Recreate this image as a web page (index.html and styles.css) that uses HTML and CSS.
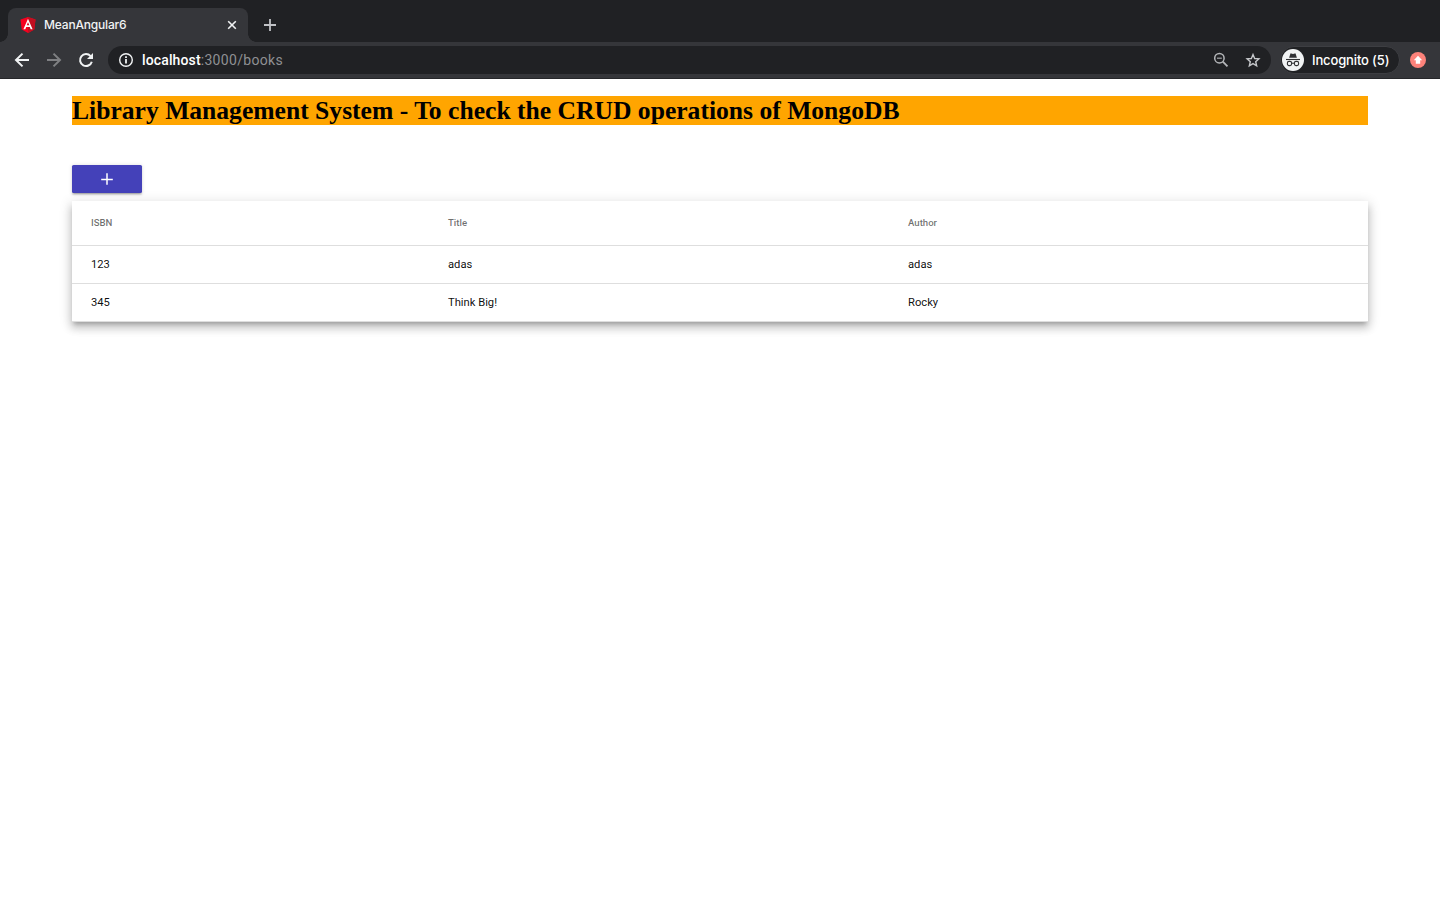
FILE: index.html
```html
<!DOCTYPE html>
<html lang="en">
<head>
<meta charset="utf-8">
<title>MeanAngular6</title>
<link rel="stylesheet" href="styles.css">
</head>
<body>
<div class="tabstrip">
  <div class="tab">
    <svg class="favicon" width="16" height="16" viewBox="0 0 16 16"><path fill="#f5001f" d="M8 0 15.5 2.6 14.3 12.4 8 16 1.7 12.4.5 2.6z"/><path fill="#c20f20" d="M8 0 15.5 2.6 14.3 12.4 8 16z"/><path fill="#fff" fill-rule="evenodd" d="M8 1.8 3.4 12.2h1.9l.9-2.3h3.6l.9 2.3h1.9zM8 5.2l1.3 3.1H6.7z"/></svg>
    <span class="tab-title">MeanAngular6</span>
    <svg class="close" width="10" height="10" viewBox="0 0 10 10"><path d="M1.2 1.2l7.6 7.6M8.8 1.2L1.2 8.8" stroke="#f1f3f4" stroke-width="1.6"/></svg>
  </div>
  <svg class="new-tab" width="12" height="12" viewBox="0 0 12 12"><path d="M6 0v12M0 6h12" stroke="#c0c2c6" stroke-width="1.8"/></svg>
</div>
<div class="toolbar">
  <svg class="nav" width="16" height="16" viewBox="0 0 16 16"><path d="M15 8H2.4M8.5 1.6 2 8l6.5 6.4" fill="none" stroke="#f1f3f4" stroke-width="2"/></svg>
  <svg class="nav" width="16" height="16" viewBox="0 0 16 16"><path d="M1 8h12.6M7.5 1.6 14 8l-6.5 6.4" fill="none" stroke="#7f8083" stroke-width="2"/></svg>
  <svg class="nav" width="16" height="16" viewBox="0 0 16 16"><path d="M12.6 4.1A6 6 0 1 0 13.8 9.7" fill="none" stroke="#f1f3f4" stroke-width="2"/><path d="M15 1V7H9z" fill="#f1f3f4"/></svg>
  <div class="omnibox">
    <svg width="16" height="16" viewBox="0 0 16 16"><circle cx="8" cy="8" r="6.3" fill="none" stroke="#f1f3f4" stroke-width="1.4"/><path d="M8 7v4.6M8 4.3V6" stroke="#f1f3f4" stroke-width="1.8"/></svg>
    <span class="url"><span class="host">localhost</span>:3000/books</span>
    <svg class="lens" width="16" height="16" viewBox="0 0 16 16"><circle cx="6.4" cy="6.2" r="4.7" fill="none" stroke="#b4b6b9" stroke-width="1.5"/><path d="M9.8 9.6l4.7 4.8" stroke="#b4b6b9" stroke-width="1.8"/><path d="M4 6.2h4.8" stroke="#a4a6a9" stroke-width="1.2"/></svg>
    <svg width="16" height="16" viewBox="0 0 16 16"><path d="M8 2.6l1.65 3.9 4.25.35-3.2 2.8.95 4.15L8 11.6l-3.65 2.2.95-4.15-3.2-2.8 4.25-.35z" fill="none" stroke="#c4c6c9" stroke-width="1.4"/></svg>
  </div>
  <div class="incognito">
    <svg width="22" height="22" viewBox="0 0 22 22"><circle cx="11" cy="11" r="11" fill="#f1f3f4"/><path d="M7.1 8.8 8.3 4.9q.2-.7.9-.5l1.8.5 1.8-.5q.7-.2.9.5l1.2 3.9z" fill="#303134"/><path d="M4 10.5h14" stroke="#303134" stroke-width="1.1"/><g fill="none" stroke="#303134" stroke-width="1.1"><rect x="5.4" y="12.4" width="4.2" height="4.2" rx="1.6"/><rect x="12.4" y="12.4" width="4.2" height="4.2" rx="1.6"/><path d="M9.6 14.2h2.8"/></g></svg>
    <span class="incognito-label">Incognito (5)</span>
  </div>
  <svg class="update" width="16" height="16" viewBox="0 0 16 16"><circle cx="8" cy="8" r="8" fill="#fc827a"/><path d="M8 3.8 12.2 8.3H10.2v3.5H5.8V8.3H3.8z" fill="#fff"/></svg>
</div>
<main class="page">
  <h1 class="heading"><span class="heading-text">Library Management System - To check the CRUD operations of MongoDB</span></h1>
  <button class="add" aria-label="Add"><svg width="12" height="12" viewBox="0 0 12 12"><path d="M6 .2v11.6M.2 6.4h11.6" stroke="#fff" stroke-width="1.5"/></svg></button>
  <div class="table">
    <div class="row head"><span>ISBN</span><span>Title</span><span>Author</span></div>
    <div class="row"><span>123</span><span>adas</span><span>adas</span></div>
    <div class="row"><span>345</span><span>Think Big!</span><span>Rocky</span></div>
  </div>
</main>
</body>
</html>
```
FILE: styles.css
```css
* { box-sizing: border-box; }
body { margin: 0; height: 900px; overflow: hidden; background: #fff; font-family: Roboto, "Liberation Sans", sans-serif; }
svg { display: block; flex: none; }

.tabstrip { display: flex; align-items: flex-start; height: 42px; padding: 8px 0 0 8px; background: #202124; }
.tab { position: relative; display: flex; align-items: center; width: 240px; height: 34px; padding: 0 11px 0 12px; background: #35363a; border-radius: 8px 8px 0 0; }
.tab::before, .tab::after { content: ""; position: absolute; bottom: 0; width: 8px; height: 8px; }
.tab::before { left: -8px; background: radial-gradient(circle at 0 0, transparent 7.5px, #35363a 8px); }
.tab::after { right: -8px; background: radial-gradient(circle at 100% 0, transparent 7.5px, #35363a 8px); }
.tab-title { flex: 1; margin-left: 8px; color: #f1f3f4; font: 500 12px/16px Inter, sans-serif; letter-spacing: -0.18px; }
.new-tab { margin: 11px 0 0 16px; }

.toolbar { display: flex; align-items: center; height: 37px; padding: 0 14px; background: #35363a; border-bottom: 1px solid #26272a; }
.nav { margin-right: 16px; }
.omnibox { display: flex; align-items: center; width: 1163px; height: 28px; margin-left: -2px; padding: 0 10px; background: #202124; border-radius: 14px; }
.url { flex: 1; margin-left: 8px; color: #8f9093; font: 14px/18px Roboto, sans-serif; letter-spacing: 0.32px; }
.host { color: #fff; font-weight: 500; letter-spacing: 0.13px; }
.lens { margin-right: 16px; }
.incognito { display: flex; align-items: center; width: 120px; height: 28px; margin-left: 9px; padding-left: 1px; background: #202124; border: 1px solid #3d3e42; border-radius: 14px; }
.incognito-label { margin-left: 8px; color: #fff; font: 500 13px/16px Inter, sans-serif; letter-spacing: -0.14px; white-space: nowrap; }
.update { margin-left: 10px; }

.page { padding: 17px 72px 0; }
.heading { height: 29px; margin: 0 0 40px; background: orange; color: #000; font: bold 25.6px/29px "Liberation Serif", serif; white-space: nowrap; }
.add { display: flex; align-items: center; justify-content: center; width: 70px; height: 28px; margin: 0 0 8px; padding: 0; background: #4441b9; border: 0; border-radius: 1.6px; box-shadow: 0 2.4px .8px -1.6px rgba(0,0,0,.2), 0 1.6px 1.6px rgba(0,0,0,.14), 0 .8px 4px rgba(0,0,0,.12); }
.table { background: #fff; box-shadow: 0 4px 4px -2.4px rgba(0,0,0,.2), 0 6.4px 8px .8px rgba(0,0,0,.14), 0 2.4px 11.2px 1.6px rgba(0,0,0,.12); }
.row { display: grid; grid-template-columns: 357px 460px 1fr; align-items: center; height: 38px; padding: 0 19px; border-bottom: 1px solid #dedede; color: rgba(0,0,0,.95); font-size: 11.2px; }
.head { height: 45px; padding-bottom: 2px; color: rgba(0,0,0,.57); font-size: 9.6px; font-weight: 500; }
```
